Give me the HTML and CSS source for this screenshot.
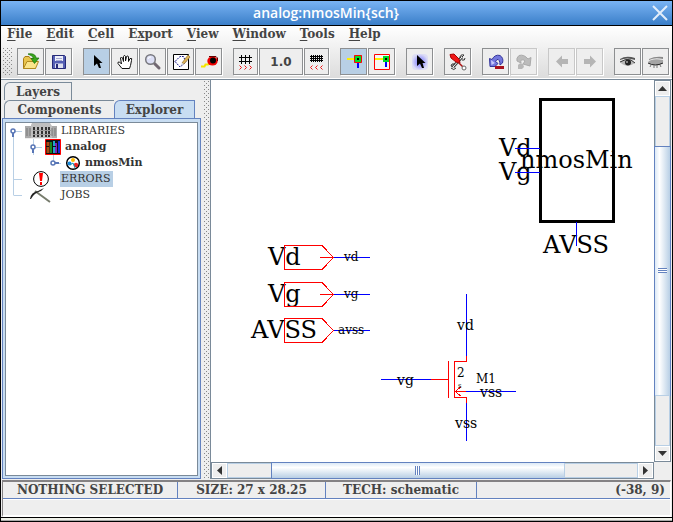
FILE: index.html
```html
<!DOCTYPE html>
<html lang="en">
<head>
<meta charset="utf-8">
<title>analog:nmosMin{sch}</title>
<link rel="stylesheet" href="styles.css">
</head>
<body>
<div class="window">
  <header class="titlebar">
    <h1 class="title">analog:nmosMin{sch}</h1>
    <button class="close" aria-label="Close"><svg width="18" height="18"><path d="M2 2L16 16M16 2L2 16" stroke="#e3edfa" stroke-width="2" fill="none"/></svg></button>
  </header>
  <div class="chrome">
    <nav class="menu">
      <button><u>F</u>ile</button><button><u>E</u>dit</button><button><u>C</u>ell</button><button>E<u>x</u>port</button><button><u>V</u>iew</button><button><u>W</u>indow</button><button><u>T</u>ools</button><button><u>H</u>elp</button>
    </nav>
    <div class="toolbar">
      <span class="grip"></span>
      <div class="group">
        <button class="tool" aria-label="Open"><svg viewBox="0 0 25 25"><path d="M5.500 9.500L7 7.500H11L12.500 9.500H17.500V19.500H5.500Z" fill="#e9c44c" stroke="#a67c16"/><path d="M5.500 19.500L9 12.500H20.500L17.500 19.500Z" fill="#fbe58b" stroke="#b28a20"/><path d="M10 5C15 4 18 6 18 9H21L16.500 14.500L13 9.500H15.500C15 7.500 13 6.500 10 5Z" fill="#39a51c" stroke="#19700c" stroke-width=".7"/></svg></button>
        <button class="tool" aria-label="Save"><svg viewBox="0 0 25 25"><path d="M6.500 6.500H18.500L19.500 7.500V19.500H6.500Z" fill="#5660b4" stroke="#262a78"/><path d="M9 7H17V12H9Z" fill="#eef0fa"/><path d="M10 9.500H16M10 11.500H16" stroke="#a4a8d0"/><path d="M9 14.500H17V19H9Z" fill="#dfe1ef"/><path d="M10 15H12V19H10Z" fill="#262a78"/></svg></button>
      </div>
      <div class="group">
        <button class="tool on" aria-label="Select"><svg viewBox="0 0 25 25"><path d="M10 6V17L13 14.500L15 19H17L15.500 14H18.500Z" fill="#000"/></svg></button>
        <button class="tool" aria-label="Pan"><svg viewBox="0 0 25 25"><path d="M10 19.500L6 14.500Q5.500 12.500 7.500 13L9.500 15L8.500 9Q9.500 7 10.500 9L11.500 12.500V7.500Q12.500 5 13.500 7.500V12L14.500 7.500Q16 6 16.500 8V12.500L18 9.500Q20.500 8.500 19.500 11.500L18.500 16.500L17.500 19.500Z" fill="#fff" stroke="#111"/></svg></button>
        <button class="tool" aria-label="Zoom"><svg viewBox="0 0 25 25"><path d="M14.500 14.500L19 19" stroke="#716872" stroke-width="3" stroke-linecap="round"/><circle cx="10.500" cy="10.500" r="4.800" fill="#dcdff5" stroke="#77777d" stroke-width="1.500"/><path d="M8 10Q8.500 7.500 11 8" fill="none" stroke="#fff"/></svg></button>
        <button class="tool" aria-label="Outline edit"><svg viewBox="0 0 25 25"><path d="M5.500 5.500H20.500V20.500H5.500Z" fill="#fff" stroke="#000"/><path d="M7 12.500L12 7.500H15.500L17 11L18 13L12 18Z" fill="none" stroke="#161689" stroke-dasharray="2 1"/><path d="M14 14L20 6L22 8L16 15Z" fill="#e0b657" stroke="#8f6f35" stroke-width=".7"/><path d="M12 17L14 14L16 15Z" fill="#ddd"/></svg></button>
        <button class="tool" aria-label="Measure"><svg viewBox="0 0 25 25"><path d="M5 17.500H8.500L9.500 15.500H12L14 13.500" fill="none" stroke="#f4e500" stroke-width="2"/><ellipse cx="16.500" cy="12" rx="5.200" ry="4.500" fill="#e00"/><circle cx="17" cy="11.500" r="3" fill="#000"/><path d="M13 7.500H20L21.500 9V12" fill="none" stroke="#600"/></svg></button>
      </div>
      <div class="group">
        <button class="tool narrow" aria-label="Coarser grid"><svg viewBox="0 0 23 25"><path d="M5 8.500H18M5 12.500H18M7.500 6V15M11.500 6V15M15.500 6V15" stroke="#000"/><path d="M5.500 16.500L7.500 18.500L5.500 20.500M10.500 16.500L12.500 18.500L10.500 20.500M15.500 16.500L17.500 18.500L15.500 20.500" fill="none" stroke="#e11"/></svg></button>
        <button class="tool scale">1.0</button>
        <button class="tool narrow" aria-label="Finer grid"><svg viewBox="0 0 23 25"><path d="M5 7.500H18M5 9.500H18M5 11.500H18M6.500 6V13M8.500 6V13M10.500 6V13M12.500 6V13M14.500 6V13M16.500 6V13" stroke="#000"/><path d="M7.500 16.500L5.500 18.500L7.500 20.500M12.500 16.500L10.500 18.500L12.500 20.500M17.500 16.500L15.500 18.500L17.500 20.500" fill="none" stroke="#e11"/></svg></button>
      </div>
      <div class="group">
        <button class="tool on" aria-label="Select objects"><svg viewBox="0 0 25 25"><path d="M6 10H14" stroke="#fff000" stroke-width="2"/><path d="M17 14V19" stroke="#00f" stroke-width="2"/><path d="M13.500 6.500H20.500V13.500H13.500Z" fill="#0d2" stroke="#f00"/><path d="M16 9H18V11H16Z"/></svg></button>
        <button class="tool" aria-label="Select area"><svg viewBox="0 0 25 25"><path d="M5.500 5.500H20.500V20.500H5.500Z" fill="#f6f6f6" stroke="#f00"/><path d="M6 10H14" stroke="#fff000" stroke-width="2"/><path d="M17 13V18" stroke="#00f" stroke-width="2"/><path d="M14 7H20V13H14Z" fill="#0d2"/><path d="M16 9H18V11H16Z"/></svg></button>
      </div>
      <div class="group">
        <button class="tool" aria-label="Special select"><svg viewBox="0 0 25 25"><defs><radialGradient id="glow"><stop offset="0" stop-color="#7c7cff"/><stop offset=".6" stop-color="#b1b1fb"/><stop offset="1" stop-color="#dedef5"/></radialGradient></defs><rect x="5" y="5" width="16" height="16" rx="4" fill="url(#glow)"/><path d="M10 6V17L13 14.500L15 19H17L15.500 14H18.500Z" fill="#000"/></svg></button>
      </div>
      <div class="group">
        <button class="tool" aria-label="Preferences"><svg viewBox="0 0 25 25"><path d="M8 18L17 8" stroke="#444" stroke-width="3"/><path d="M8 18L17 8" stroke="#fff"/><path d="M10 15Q6 14 6 17L8 18M6 19Q9 22 11 19M15 9Q15 5 19 6L17 8M20 9Q20 12 17 11" fill="none" stroke="#333"/><path d="M5 5.500L9 5L14 10L15 14L11 13L6 9Z" fill="#f01818" stroke="#a00"/><path d="M13 13L18 18" stroke="#a11" stroke-width="1.500"/><circle cx="19" cy="19" r="2" fill="#fff" stroke="#666"/></svg></button>
      </div>
      <div class="group">
        <button class="tool" aria-label="Undo"><svg viewBox="0 0 25 25"><path d="M6.500 9.500L9 10.500Q12 5 17 6.500Q21 9 19.500 14L17 16Q17 10 14 10.500L12.500 12.500L15 14.500L12 17.500H7Z" fill="#7376dc" stroke="#35369b"/><path d="M8 11L12 14L8.500 16Z" fill="#c7cafb"/><path d="M12 17H21V20H12Z" fill="#a8101c"/></svg></button>
        <button class="tool off" aria-label="Redo" disabled><svg viewBox="0 0 25 25"><path d="M20 8.500L17 10Q13 5 8 6.500Q5 9 6 12L10 14Q9 10 12.500 11L14 12L12 15L19 17Z" fill="#bcbcbc" stroke="#aaa"/><path d="M7 16Q9 13 12 15L13 18L11 20H7Z" fill="#b8b8b8"/></svg></button>
      </div>
      <div class="group">
        <button class="tool off" aria-label="Back" disabled><svg viewBox="0 0 25 25"><path d="M7 12.500L13 6.500V10H19V15H13V18.500Z" fill="#b5b5b5"/></svg></button>
        <button class="tool off" aria-label="Forward" disabled><svg viewBox="0 0 25 25"><path d="M19 12.500L13 6.500V10H7V15H13V18.500Z" fill="#b5b5b5"/></svg></button>
      </div>
      <div class="group">
        <button class="tool" aria-label="Expand"><svg viewBox="0 0 25 25"><path d="M5 10Q11 6 20 9L20 11Q12 8 5 11Z" fill="#555"/><path d="M5 13Q11 9 16 11L20 14Q13 19 7 15Z" fill="#b8b8b8"/><path d="M5 13Q11 9 16 11L20 14" fill="none" stroke="#333"/><circle cx="13" cy="13.500" r="3" fill="#222"/><circle cx="12" cy="13" r=".8" fill="#fff"/></svg></button>
        <button class="tool" aria-label="Unexpand"><svg viewBox="0 0 25 25"><path d="M6 10Q12 7 20 8L20 10Q12 8 6 11Z" fill="#888"/><path d="M5 13Q9 9 20 11Q21 15 16 16Q9 17 5 13Z" fill="#a4a4a4"/><path d="M5 14Q12 18 20 14" fill="none" stroke="#222"/><path d="M8 16L7 18M11 16V19M14 16V19M17 16L18 18" stroke="#777"/></svg></button>
      </div>
    </div>
  </div>

  <main class="main">
    <aside class="side">
      <div class="tabs" role="tablist">
        <div class="tabrow"><button class="tab" role="tab">Layers</button></div>
        <div class="tabrow"><button class="tab wide" role="tab">Components</button><button class="tab active" role="tab" aria-selected="true">Explorer</button></div>
      </div>
      <div class="panel">
        <ul class="tree">
          <li><svg width="53" height="16"><path d="M6.500 8V16M6.500 8.500H15" stroke="#b8cfe5"/><circle cx="6" cy="8" r="2" fill="#fff" stroke="#5876b6" stroke-width="1.500"/><path d="M6 10V14" stroke="#5876b6" stroke-width="2"/><path d="M18 3H50V15H18Z" fill="#aaa"/><path d="M25 0H43L45 3V15H24V2Z" fill="#bfbfbf"/><path d="M20 5V13M23 5V13M45 5V13M48 5V13" stroke="#777"/><path d="M27 4V14M31 4V14M35 4V14M39 4V14M42 4V14" stroke="#333" stroke-width="2"/><path d="M26 7.500H44M26 11.500H44" stroke="#999"/><path d="M18 15.500H50" stroke="#eee"/></svg><span>LIBRARIES</span></li>
          <li><svg width="56" height="16"><path d="M6.500 0V16M26.500 0V16M26.500 8.500H35" stroke="#b8cfe5"/><circle cx="26" cy="8" r="2" fill="#fff" stroke="#5876b6" stroke-width="1.500"/><path d="M26 10V14" stroke="#5876b6" stroke-width="2"/><path d="M38.500 .5H53.500V15.500H38.500Z" fill="#111" stroke="#f00"/><path d="M41 3V14" stroke="#a04e16" stroke-width="3"/><path d="M44 3V14" stroke="#188a20" stroke-width="2"/><path d="M47 2V14" stroke="#1ba8c7" stroke-width="2"/><path d="M49 4V14" stroke="#7f20bc" stroke-width="2"/><path d="M52 2V14" stroke="#1428d8" stroke-width="2"/><path d="M39 7.500H53" stroke="#111" stroke-dasharray="3 4"/></svg><b>analog</b></li>
          <li><svg width="76" height="16"><path d="M6.500 0V16M46.500 0V8M46.500 8.500H54" stroke="#b8cfe5"/><circle cx="46" cy="8" r="2" fill="#fff" stroke="#5876b6" stroke-width="1.500"/><path d="M48 8H52" stroke="#5876b6" stroke-width="2"/><circle cx="66" cy="8" r="6.300" fill="#fff" stroke="#000" stroke-width="1.500"/><circle cx="66" cy="5" r="2" fill="#fb0"/><circle cx="62.500" cy="8.500" r="2" fill="#18d"/><circle cx="69" cy="10" r="2.200" fill="#e22"/><path d="M63 10L66 8L68 13" fill="none" stroke="#1792ad"/></svg><b>nmosMin</b></li>
          <li><svg width="53" height="16"><path d="M6.500 0V16M6.500 8.500H15" stroke="#b8cfe5"/><circle cx="34" cy="8" r="7.400" fill="#fff" stroke="#000"/><path d="M32 2H36L35 10H33ZM33 11H35V14H33Z" fill="#f00"/></svg><span class="selected">ERRORS</span></li>
          <li><svg width="53" height="16"><path d="M6.500 0V8M6.500 8.500H15" stroke="#b8cfe5"/><path d="M28 4L43 15" stroke="#777c6d" stroke-width="2"/><path d="M23 12Q24 5 31 4L37 1L34 4Q27 6 24 12Z" fill="#222"/></svg><span>JOBS</span></li>
        </ul>
      </div>
    </aside>
    <div class="divider"></div>
    <section class="editor">
      <div class="canvas">
        <svg class="schematic" width="100%" height="100%" role="img" aria-label="nmosMin schematic">
          <g transform="translate(-211 -80)" fill="none">
            <g class="big">
              <text x="268" y="265">Vd</text><text x="268" y="302">Vg</text><text x="251" y="338">AVSS</text>
              <text x="499" y="156">Vd</text><text x="499" y="180">Vg</text><text x="520" y="168">nmosMin</text><text x="543" y="253">AVSS</text>
            </g>
            <path d="M540 99.500H613.500V221.500H540Z" stroke="#000" stroke-width="3"/>
            <g stroke="#00f"><path d="M515 148.500H540M515 172.500H540M576.500 222V246M333 257.500H370M333 294.500H370M333 330.500H370"/><path d="M466.500 294V357M466.500 403V441M381 379.500H432M465 391.500H516"/></g>
            <g stroke="#f00"><path d="M284.500 245.500H322L333.500 257.500L322 269.500H284.500ZM320 257.500H333M284.500 282.500H322L333.500 294.500L322 306.500H284.500ZM320 294.500H333M284.500 318.500H322L333.500 330.500L322 342.500H284.500Z"/><path d="M466.500 356V361.500H454.500V397.500H466.500V403M448.500 361V398M431 379.500H448M455 391.500H466M460.500 387L455.500 391.500L460.500 396"/></g>
            <g class="small"><text x="344" y="261">vd</text><text x="344" y="298">vg</text><text x="338" y="334">avss</text><text x="457" y="377">2</text><text x="476" y="383">M1</text></g>
            <g class="medium"><text x="457" y="330">vd</text><text x="397" y="385">vg</text><text x="480" y="397">vss</text><text x="455" y="428">vss</text></g>
            <text class="tiny" x="458" y="388">s</text>
          </g>
        </svg>
      </div>
      <div class="bar vertical"><span class="arrow"><svg width="9" height="5"><path d="M4.500 0L9 5H0Z"/></svg></span><span class="track before"></span><span class="thumb"></span><span class="track after"></span><span class="arrow"><svg width="9" height="5"><path d="M4.500 5L9 0H0Z"/></svg></span></div>
      <div class="bar horizontal"><span class="arrow"><svg width="5" height="9"><path d="M0 4.500L5 0V9Z"/></svg></span><span class="track before"></span><span class="thumb"></span><span class="track after"></span><span class="arrow"><svg width="5" height="9"><path d="M5 4.500L0 0V9Z"/></svg></span></div>
    </section>
  </main>

  <footer class="status">
    <div class="cells"><span>NOTHING SELECTED</span><span>SIZE: 27 x 28.25</span><span>TECH: schematic</span><span class="coords">(-38, 9)</span></div>
    <div class="message"></div>
  </footer>
  <div class="frame"></div>
</div>
</body>
</html>
```
FILE: styles.css
```css
* { box-sizing: border-box; }
body {
  margin: 0;
  font: bold 12px/16px "DejaVu Serif", serif;
  color: #444;
}
button { font: inherit; color: inherit; margin: 0; padding: 0; border: 0; background: none; }
svg { display: block; flex: none; }
.window {
  display: flex;
  flex-direction: column;
  height: 100vh;
  border: 1px solid #000;
  background: #eee;
  overflow: hidden;
}
.titlebar {
  display: flex;
  align-items: center;
  height: 25px;
  flex: none;
  padding: 0 3px 0 0;
  border-bottom: 1px solid #000;
  background: linear-gradient(#79b3f3, #3b7fc9);
}
.title {
  flex: 1;
  margin: 0;
  text-align: center;
  font: 600 14px/20px "Open Sans", sans-serif;
  color: #fff;
}

.chrome {
  flex: none;
  height: 53px;
  background: linear-gradient(#fff, #dcdcdc);
  border-bottom: 1px solid #fff;
}
.menu { display: flex; align-items: flex-start; gap: 14px; height: 22px; padding: 0 6px; }
.menu u { text-underline-offset: 2px; }
.toolbar { display: flex; gap: 11px; padding: 0 2px; }
.grip {
  width: 10px;
  height: 28px;
  margin-right: -7px;
}
.grip, .divider {
  background-image: conic-gradient(at 1px 1px, transparent 75%, #888 0), conic-gradient(at 1px 1px, transparent 75%, #888 0);
  background-size: 4px 4px;
  background-position: 0 0, 2px 2px;
}
.group { display: flex; gap: 1px; }
.tool {
  width: 27px;
  height: 27px;
  border: 1px solid #8d8f91;
  background: #eee;
  box-shadow: 1px 1px #fff;
}
.tool svg { width: 100%; height: 100%; }
.tool.on { background: #b8cfe5; }
.tool.off { border-color: #c8c8c8; }
.tool.narrow { width: 25px; }
.tool.scale { width: 44px; font: bold 12px/16px "DejaVu Sans", sans-serif; }

.main {
  display: flex;
  flex: 1;
  min-height: 0;
  border-top: 1px solid #7a8a99;
}
.side { display: flex; flex-direction: column; width: 200px; flex: none; padding-left: 1px; }
.tabs { padding: 2px 2px 0; }
.tabrow { display: flex; height: 18px; }
.tab {
  width: 68px;
  border: 1px solid #7a8a99;
  border-bottom: 0;
  border-top-left-radius: 6px;
}
.tab.wide { width: 110px; border-right: 0; }
.tab.active { width: 81px; border-color: #6382bf; background: #c8ddf2; }
.panel {
  flex: 1;
  padding: 3px 2px 2px;
  border: 1px solid #6382bf;
  background: #c8ddf2;
}
.tree {
  height: 100%;
  margin: 0;
  padding: 0 0 0 1px;
  list-style: none;
  border: 1px solid #7a8a99;
  background: #fff;
  font: 11px/16px "DejaVu Serif", serif;
  color: #333;
}
.tree li { display: flex; height: 16px; }
.tree span, .tree b { padding: 0 2px; }
.tree span { padding: 0 3px 0 1px; }
.selected { background: #b8cfe5; }
.divider {
  width: 5px;
  flex: none;
  margin: 1px 1px 1px 3px;
}

.editor {
  flex: 1;
  min-width: 0;
  display: grid;
  grid-template: minmax(0, 1fr) 17px / minmax(0, 1fr) 17px;
  margin-right: 1px;
  border-left: 1px solid #7a8a99;
}
.canvas { background: #fff; min-width: 0; min-height: 0; }
.schematic { shape-rendering: crispEdges; font-family: "DejaVu Serif", serif; font-weight: normal; }
.schematic text { fill: #000; stroke: none; }
.big { font-size: 24px; }
.small { font-size: 12px; }
.medium { font-size: 14px; }
.tiny { font-size: 7px; }

.bar { display: flex; border: 1px solid #7a8a99; }
.vertical { flex-direction: column; }
.vertical .before { flex: 50; }
.vertical .thumb { flex: 250; }
.vertical .after { flex: 50; }
.horizontal .before { flex: 43; }
.horizontal .thumb { flex: 295; }
.horizontal .after { flex: 73; }
.arrow {
  display: flex;
  align-items: center;
  justify-content: center;
  width: 15px;
  height: 15px;
  flex: none;
  border: 1px solid #fff;
  background: #eee;
  fill: #333;
}
.track { border: 1px solid #b8cfe5; }
.thumb {
  display: flex;
  align-items: center;
  justify-content: center;
  outline: 1px solid #6382bf;
  background: linear-gradient(90deg, #dce9f6, #fff 30%, #b8cfe5);
}
.horizontal .thumb { background: linear-gradient(#dce9f6, #fff 30%, #b8cfe5); }
.thumb::after {
  content: "";
  width: 9px;
  height: 5px;
  background: repeating-linear-gradient(#6382bf 0 1px, #fff 1px 2px);
}
.horizontal .thumb::after {
  width: 5px;
  height: 9px;
  background: repeating-linear-gradient(90deg, #6382bf 0 1px, #fff 1px 2px);
}

.status {
  flex: none;
  margin: 1px 1px 0;
  border-top: 2px solid #848284;
  border-left: 1px solid #848284;
  border-right: 1px solid #fff;
  border-bottom: 2px solid #fff;
}
.cells {
  display: grid;
  grid-template-columns: 175px 148px 151px 1fr;
  border-bottom: 1px solid #6382bf;
  text-align: center;
}
.cells span { height: 16px; line-height: 16px; border-right: 1px solid #6382bf; }
.cells .coords { padding-right: 5px; border: 0; text-align: right; }
.message { height: 16px; border-top: 1px solid #fff; }
.frame {
  flex: none;
  height: 4px;
  border-top: 1px solid #000;
  border-bottom: 1px solid #aaa;
  background: #eef0e8;
}
```
